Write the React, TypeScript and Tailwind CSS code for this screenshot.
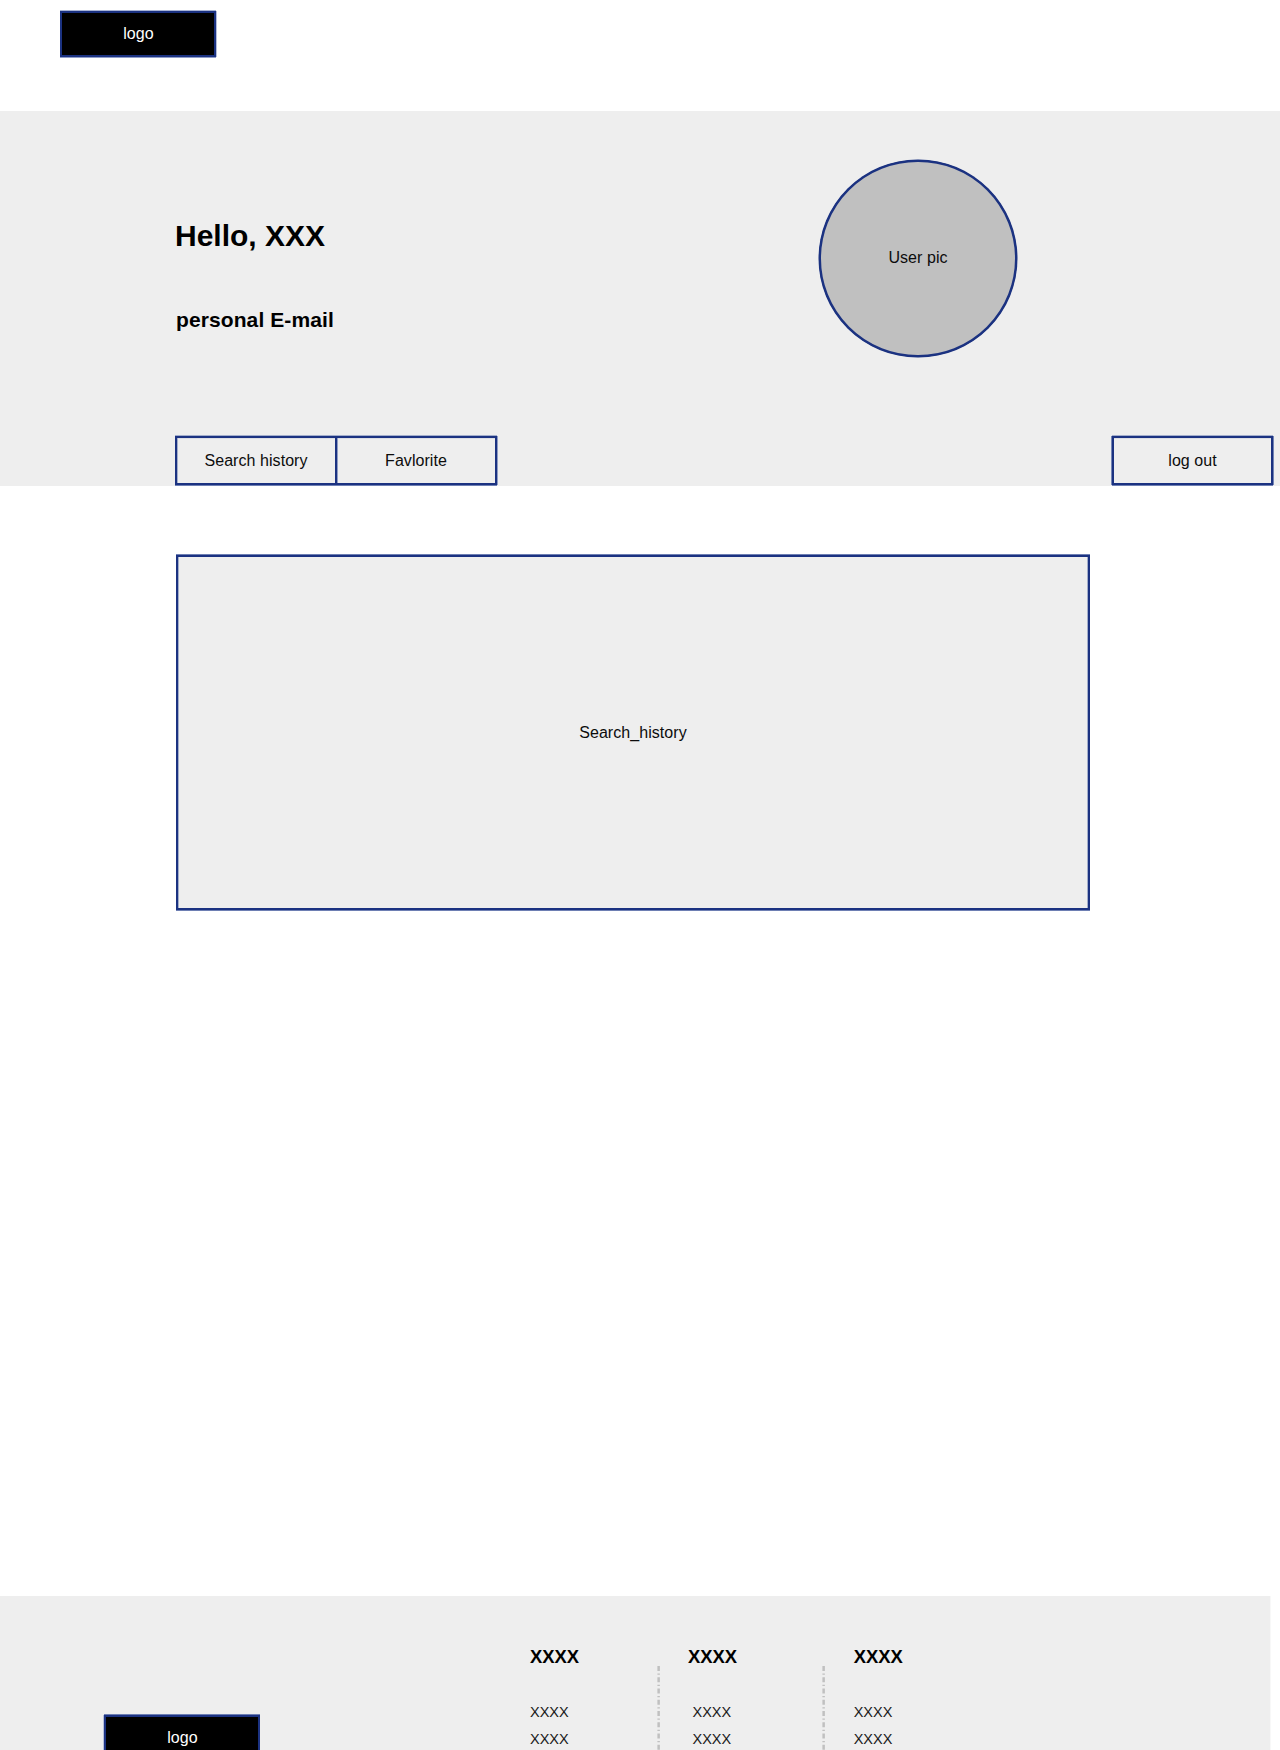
import React from "react";

function Logo({ className }: { className: string }) {
  return (
    <div
      className={`flex h-[46px] w-[156px] items-center justify-center border-2 border-[#1b3281] bg-black pl-px text-base text-white ${className}`}
    >
      logo
    </div>
  );
}

function Divider() {
  return (
    <svg className="mt-[21px] h-[240px] w-[3px] shrink-0" viewBox="0 0 3 240" fill="none">
      <path d="M1.65 0V240" stroke="#c0c0c0" strokeWidth="2.5" strokeDasharray="5 2.5 1.25 2.5" />
    </svg>
  );
}

function LinkColumn({ className, listClassName = "" }: { className: string; listClassName?: string }) {
  return (
    <div className={className}>
      <h3 className="text-[18.4px] leading-[24px] font-bold tracking-normal">XXXX</h3>
      <ul className={`mt-[30px] text-[14.5px] leading-[27px] tracking-normal text-[#1a1a1a] ${listClassName}`}>
        <li>XXXX</li>
        <li>XXXX</li>
      </ul>
    </div>
  );
}

export default function App() {
  return (
    <div className="flex h-[1750px] w-[1280px] flex-col overflow-hidden bg-white font-['Liberation_Sans',Arial,sans-serif] text-base tracking-[0.06px] text-[#0c0c0c]">
      <header className="h-[111px] shrink-0 pt-[11px] pl-[60px]">
        <Logo className="shadow-[0_-1px_0_#a9b4d4,1px_0_0_#b5bedb,0_1px_0_#8e9bc6]" />
      </header>

      <section className="flex h-[375px] shrink-0 flex-col justify-between bg-[#eeeeee]">
        <div className="flex pl-[175px]">
          <div className="w-[644px] pt-[107px] text-black">
            <h1 className="text-[30px] leading-[36px] font-bold tracking-normal">Hello, XXX</h1>
            <h2 className="mt-[52px] ml-px text-[21px] leading-[28px] font-bold tracking-[0.1px]">
              personal E-mail
            </h2>
          </div>
          <div className="mt-[49px] flex h-[197px] w-[198px] items-center justify-center rounded-full border-2 border-[#1b3281] bg-[#c0c0c0] pb-px shadow-[0_0_0_0.5px_#1b3281]">
            User pic
          </div>
        </div>
        <div className="flex items-end pr-[7px] pb-px pl-[175px]">
          <div className="flex h-[49px] w-[322px] border-2 border-[#1b3281] shadow-[0_-1px_0_#a3aecb,0_1px_0_#6e7fb3,1px_0_0_#8e9bc3,inset_1px_0_0_#a3aecb,inset_0_1px_0_#dbdde4]">
            <div className="flex w-[160px] items-center justify-center border-r-2 border-[#1b3281] shadow-[1px_0_0_#8e9bc3]">
              Search history
            </div>
            <div className="flex flex-1 items-center justify-center">Favlorite</div>
          </div>
          <div className="ml-auto flex h-[49px] w-[161px] items-center justify-center border-2 border-[#1b3281] shadow-[0_-1px_0_#a3aecb,0_1px_0_#6e7fb3,1px_0_0_#7384b5,-1px_0_0_#7384b5,inset_0_1px_0_#dbdde4]">
            log out
          </div>
        </div>
      </section>

      <main className="h-[1110px] shrink-0 pt-[69px] pl-[176px]">
        <div className="flex h-[355px] w-[914px] items-center justify-center border-2 border-[#1b3281] bg-[#eeeeee] shadow-[0_-1px_0_#6e7fb3,0_1px_0_#6e7fb3,inset_1px_0_0_#a3aecb,inset_-1px_0_0_#a3aecb]">
          Search_history
        </div>
      </main>

      <footer className="flex h-[154px] w-[1270px] shrink-0 overflow-hidden bg-[#eeeeee] pl-[104px] text-black shadow-[1px_0_0_#f8f8f8]">
        <Logo className="mt-[119px] shadow-[-1px_0_0_#b5bedb,0_-1px_0_#6e7fb3]" />
        <div className="ml-[270px] flex pt-[49px]">
          <LinkColumn className="w-[127px]" />
          <Divider />
          <LinkColumn className="ml-[28px] w-[134px]" listClassName="ml-[4.5px]" />
          <Divider />
          <LinkColumn className="ml-[28.7px]" />
        </div>
      </footer>
    </div>
  );
}
